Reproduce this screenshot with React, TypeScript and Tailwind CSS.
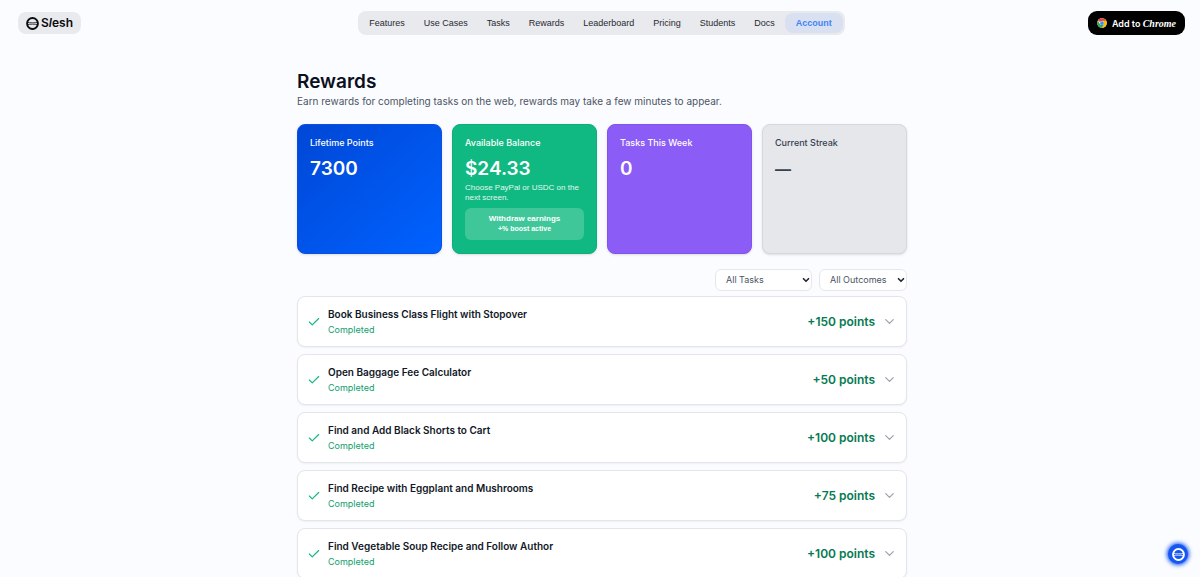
import { JSX } from "react";
import { Check, ChevronDown } from "lucide-react";

interface NavItem {
  name: string;
  href: string;
}

interface Task {
  title: string;
  points: number;
}

interface FilterProps {
  label: string;
  option: string;
  className: string;
}

const navItems: NavItem[] = [
  { name: "Features", href: "#features" },
  { name: "Use Cases", href: "#use-cases" },
  { name: "Tasks", href: "#tasks" },
  { name: "Rewards", href: "#rewards" },
  { name: "Leaderboard", href: "#leaderboard" },
  { name: "Pricing", href: "#pricing" },
  { name: "Students", href: "#students" },
  { name: "Docs", href: "#docs" },
  { name: "Account", href: "#account" },
];

const tasks: Task[] = [
  { title: "Book Business Class Flight with Stopover", points: 150 },
  { title: "Open Baggage Fee Calculator", points: 50 },
  { title: "Find and Add Black Shorts to Cart", points: 100 },
  { title: "Find Recipe with Eggplant and Mushrooms", points: 75 },
  { title: "Find Vegetable Soup Recipe and Follow Author", points: 100 },
];

const SleshMark = ({ className }: { className: string }): JSX.Element => (
  <svg viewBox="0 0 24 24" fill="none" stroke="currentColor" className={className}>
    <circle cx="12" cy="12" r="10" strokeWidth="3.6" />
    <path d="M3 10c4 .9 14 .9 18 0M3 14c4-.9 14-.9 18 0" strokeWidth="1.4" />
  </svg>
);

const ChromeLogo = (): JSX.Element => (
  <svg viewBox="0 0 48 48" className="size-[10px]">
    <circle cx="24" cy="24" r="23" fill="#fff" />
    <path d="M24 24 4.080 12.500A23 23 0 0 1 43.920 12.500Z" fill="#ea4335" />
    <path d="M24 13H43.900A23 23 0 0 1 24 47L33.500 29.500Z" fill="#fbbc04" />
    <path d="M24 47A23 23 0 0 1 4.080 12.500L14.500 29.500 33.500 29.500Z" fill="#34a853" />
    <circle cx="24" cy="24" r="10" fill="#fff" />
    <circle cx="24" cy="24" r="9" fill="#4285f4" />
  </svg>
);

const Header = (): JSX.Element => (
  <header className="grid grid-cols-[1fr_auto_1fr] items-center pt-[11px] pr-[15px] pl-[18px]">
    <a
      href="#home"
      className="flex h-[22px] items-center gap-[2px] justify-self-start rounded-lg bg-[#e9eaee] px-2 text-xs font-semibold text-[#0b0c10]"
    >
      <SleshMark className="size-[13px]" />
      <span>
        S<i>l</i>esh
      </span>
    </a>

    <nav className="flex h-6 items-center gap-px rounded-lg bg-[#e9eaee] px-[2px] font-['Liberation_Sans',sans-serif] text-[9px]">
      {navItems.map((item) => (
        <a
          key={item.name}
          href={item.href}
          className={`flex h-5 items-center rounded-lg pt-px ${
            item.name === "Account"
              ? "bg-[#d9e0f1] px-[11px] font-bold text-[#4285f4]"
              : "px-[9px] text-[#27292e] hover:text-black"
          }`}
        >
          {item.name}
        </a>
      ))}
    </nav>

    <button
      type="button"
      className="flex h-6 items-center gap-[5px] justify-self-end rounded-[9px] bg-black px-[9px] text-[9px] font-semibold text-white"
    >
      <ChromeLogo />
      <span>
        Add to{" "}
        <span className="font-['Liberation_Serif',serif] text-[10px] font-bold italic">
          Chrome
        </span>
      </span>
    </button>
  </header>
);

const cardBase =
  "flex min-h-[130px] flex-col rounded-lg border px-3 py-3 shadow-sm";

const StatCards = (): JSX.Element => (
  <section className="mt-4 grid grid-cols-4 gap-[10px]">
    <div
      className={`${cardBase} border-[#0b50e0] bg-linear-to-br from-[#0047d6] to-[#0062ff] text-white`}
    >
      <h2 className="text-[9px] leading-3 font-medium">Lifetime Points</h2>
      <p className="mt-2 text-[19px] leading-6 font-semibold">7300</p>
    </div>

    <div className={`${cardBase} border-[#0fae78] bg-[#10b981] text-white`}>
      <h2 className="text-[9px] leading-3 font-medium">Available Balance</h2>
      <p className="mt-2 text-[19px] leading-6 font-semibold">$24.33</p>
      <p className="mt-[2px] font-['Liberation_Sans',sans-serif] text-[8px] leading-[10px] text-[#e0f7ee]">
        Choose PayPal or USDC on the next screen.
      </p>
      <button
        type="button"
        className="mt-[5px] flex h-8 flex-col items-center justify-center rounded-md bg-white/20 font-['Liberation_Sans',sans-serif] text-[8px] leading-[10px] font-bold"
      >
        Withdraw earnings
        <span className="text-[7px]">+% boost active</span>
      </button>
    </div>

    <div className={`${cardBase} border-[#8353ee] bg-[#8b5cf6] text-white`}>
      <h2 className="text-[9px] leading-3 font-medium">Tasks This Week</h2>
      <p className="mt-2 text-[19px] leading-6 font-semibold">0</p>
    </div>

    <div className={`${cardBase} border-[#d5d8de] bg-[#e5e7eb] text-[#374151]`}>
      <h2 className="text-[9px] leading-3 font-medium">Current Streak</h2>
      <p className="mt-2 text-base leading-6 font-semibold">—</p>
    </div>
  </section>
);

const Filter = ({ label, option, className }: FilterProps): JSX.Element => (
  <div className={`relative ${className}`}>
    <select
      aria-label={label}
      className="h-[22px] w-full appearance-none rounded-md border border-[#e5e7eb] bg-white pl-[10px]"
    >
      <option>{option}</option>
    </select>
    <ChevronDown
      className="pointer-events-none absolute top-[6px] right-px size-[10px] text-[#1f2937]"
      strokeWidth={4}
    />
  </div>
);

const TaskRow = ({ title, points }: Task): JSX.Element => (
  <li>
    <button
      type="button"
      className="flex h-[51px] w-full items-center rounded-lg border border-[#e3e5ea] bg-white px-[9px] text-left shadow-xs"
    >
      <Check className="size-[14px] text-[#10b981]" strokeWidth={2} />
      <div className="ml-[7px] flex-1">
        <h3 className="text-[10px] leading-4 font-semibold text-[#111827]">
          {title}
        </h3>
        <p className="text-[9px] leading-4 text-[#10a06c]">Completed</p>
      </div>
      <span className="text-xs font-semibold text-[#047a50]">
        +{points} points
      </span>
      <ChevronDown
        className="ml-[7px] size-[15px] text-[#9ca3af]"
        strokeWidth={2}
      />
    </button>
  </li>
);

const App = (): JSX.Element => {
  return (
    <div className="h-screen overflow-hidden bg-[#fbfcff] font-[Inter,sans-serif]">
      <Header />

      <main className="mx-auto mt-[35px] w-full max-w-[610px] translate-x-[2px]">
        <h1 className="text-[19px] leading-6 font-semibold text-[#0b1020]">
          Rewards
        </h1>
        <p className="text-[10px] leading-[14px] text-[#4b5563]">
          Earn rewards for completing tasks on the web, rewards may take a few
          minutes to appear.
        </p>

        <StatCards />

        <div className="mt-[15px] flex justify-end gap-[7px] text-[9px] text-[#4b5563]">
          <Filter label="Task type" option="All Tasks" className="w-[97px]" />
          <Filter label="Outcome" option="All Outcomes" className="w-[88px]" />
        </div>

        <ul className="mt-[5px] flex flex-col gap-[7px]">
          {tasks.map((task) => (
            <TaskRow key={task.title} {...task} />
          ))}
        </ul>
      </main>

      <button
        type="button"
        aria-label="Open Slesh"
        className="fixed right-3 bottom-[13px] flex size-5 items-center justify-center rounded-full bg-[#1557f0] text-white shadow-[0_0_4px_1px_#1557f0]"
      >
        <SleshMark className="size-[13px]" />
      </button>
    </div>
  );
};

export default App;
